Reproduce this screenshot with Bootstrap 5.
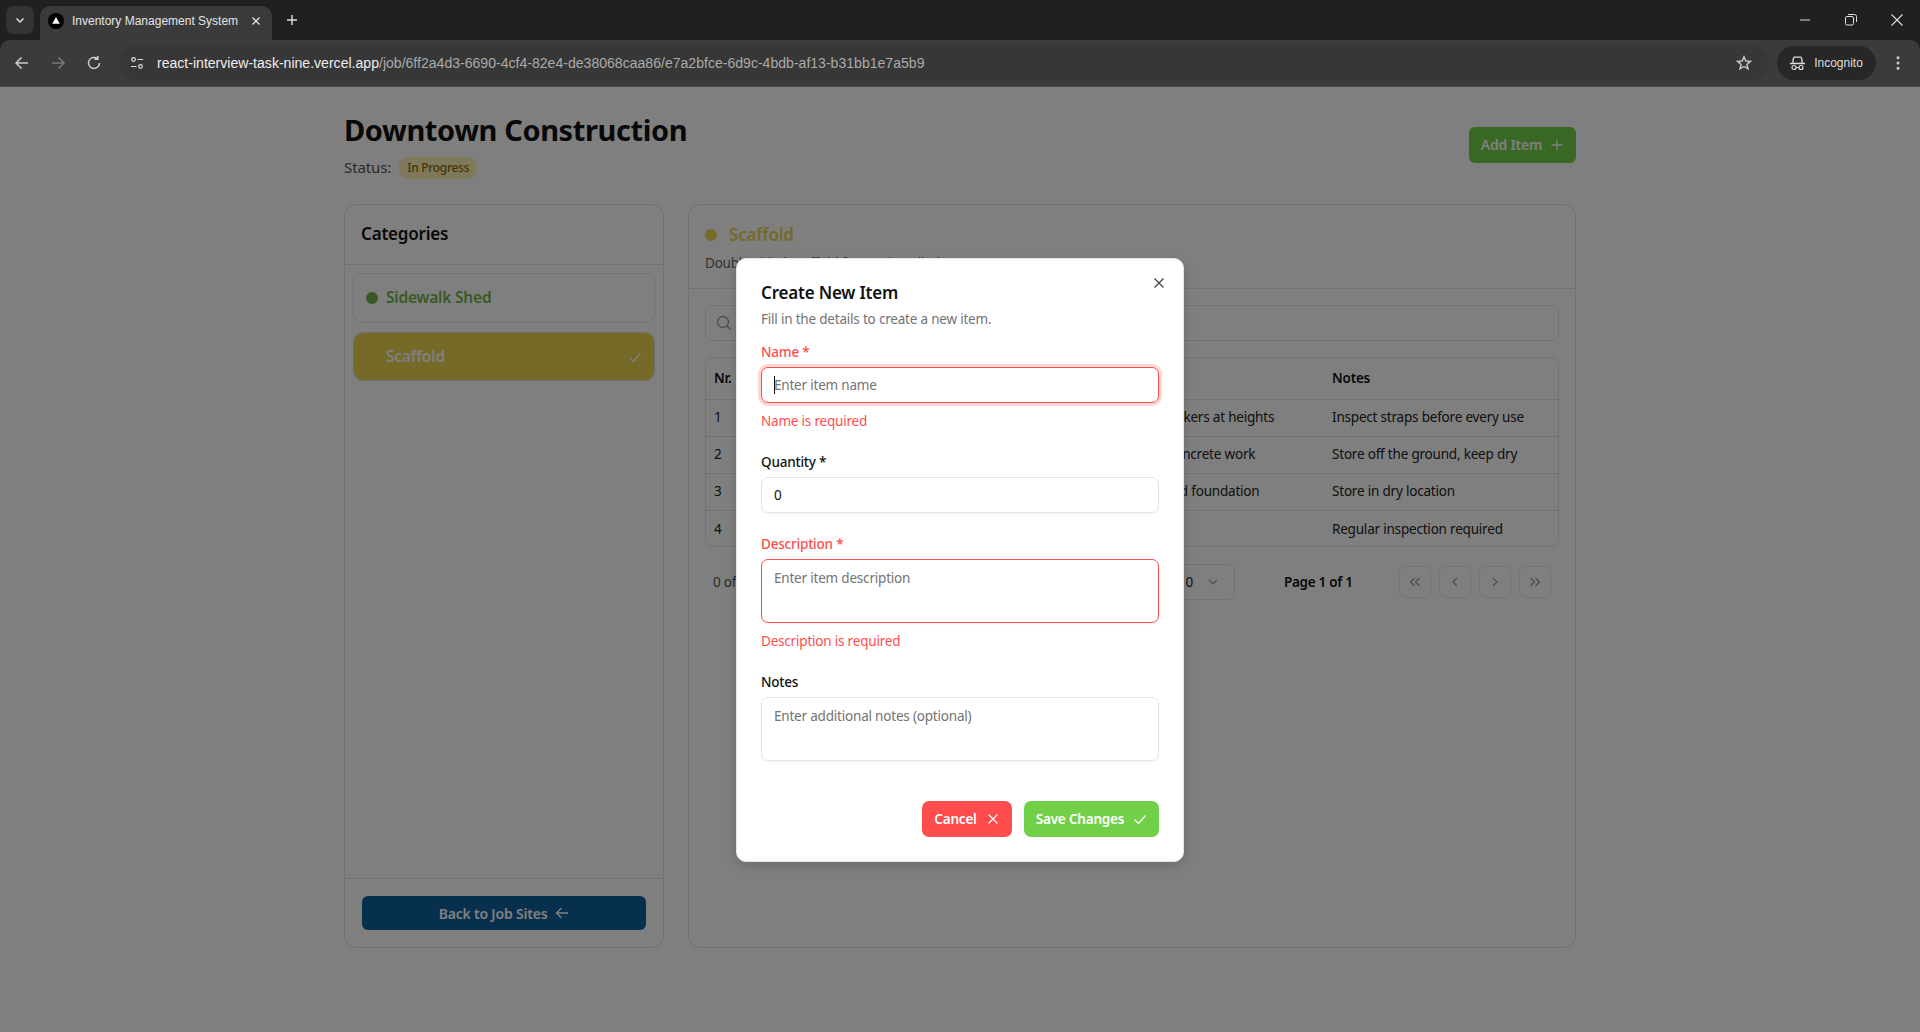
<!DOCTYPE html>
<html lang="en"><head><meta charset="utf-8"><title>Inventory Management System</title>
<link href="https://cdn.jsdelivr.net/npm/bootstrap@5.3.0/dist/css/bootstrap.min.css" rel="stylesheet">
<style>
html,body{height:100%;overflow:hidden}
body{font-family:"Noto Sans","Open Sans",sans-serif;color:#111;background:#fff;display:flex;flex-direction:column;font-size:13.5px;letter-spacing:-.2px}
svg{display:block;flex:none}
button,input,textarea{letter-spacing:inherit}
.chromewrap{background:#1f2120;flex:none;letter-spacing:0}
.tabstrip{height:40px;display:flex;align-items:flex-end;color:#ddd}
.tabsearch{width:28px;height:28px;border-radius:8px;background:#333;margin:0 6px 6px 6px;display:flex;align-items:center;justify-content:center}
.tabitem{width:232px;height:34px;background:#3b3b3b;border-radius:10px 10px 0 0;display:flex;align-items:center;padding:0 11px 4px 8px;font:12px "Liberation Sans",sans-serif;color:#e3e3e3;gap:8px}
.tabitem span{flex:1;white-space:nowrap}
.newtab{margin:0 0 14px 14px}
.winctl{margin-left:auto;display:flex;align-items:center;gap:34px;padding:0 17px 14px 0}
.toolbar{height:47px;background:#3b3b3b;border-radius:10px 10px 0 0;display:flex;align-items:center;border-bottom:1px solid #4a4a4a;padding-left:14px;gap:20px}
.urlbar{width:1648px;height:34px;margin-left:-2px;border-radius:17px;background:#373737;display:flex;align-items:center;padding:0 16px 0 9px;font:14.070px "Liberation Sans",sans-serif;color:#aaa;white-space:nowrap}
.urltext{margin-left:12px}
.urlbar b{font-weight:400;color:#eee}
.incog{height:34px;width:99px;border-radius:17px;background:#272727;margin-left:-11px;display:flex;align-items:center;justify-content:center;gap:9px;font:12px "Liberation Sans",sans-serif;color:#ddd}
.dots{margin-left:-6px}
.pagearea{position:relative;flex:1;min-height:0}
.shell{width:1232px;margin:0 auto;padding-top:24px;height:100%}
.jobtitle{font-size:29px;font-weight:700;line-height:38px;margin:0;color:#111;letter-spacing:-.4px}
.statusline{color:#555;line-height:24px;margin-top:6px;gap:8px;font-size:15px;letter-spacing:-.1px}
.statuschip{background:#fdf3b6;color:#8a6a05;font-size:12px;font-weight:500;border-radius:9px;padding:0 8px;line-height:22px;letter-spacing:-.3px;margin-top:1px}
.addbtn{background:#72d048;color:#fff;font-weight:600;border:0;height:36px;width:107px;border-radius:6px;font-size:14px;gap:8px;margin-top:-1px}
.panels{display:flex;gap:24px;margin-top:25px;height:744px}
.panelbox{border:1px solid #e2e2e2;border-radius:12px;background:#fff;display:flex;flex-direction:column}
.catpanel{width:320px}
.dataPanel{width:888px}
.cathead{height:60px;border-bottom:1px solid #e2e2e2;padding:0 16px 1px;font-size:17px;font-weight:600;display:flex;align-items:center}
.catlist{flex:1;padding:8px;display:flex;flex-direction:column;gap:9px}
.catitem{height:50px;border:1px solid #e5e5e5;border-radius:10px;display:flex;align-items:center;padding:0 12px;gap:8px;font-size:15.500px;font-weight:600;color:#72b548}
.catitem.chosen{background:#ecd552;color:#fff;padding-left:32px;height:49px;border-color:#dfdfdf;justify-content:space-between}
.dotmark{width:12px;height:12px;border-radius:50%;background:#72b548}
.dotmark.gold{background:#ecd552}
.catfoot{height:69px;border-top:1px solid #e2e2e2;padding:17px 17px 0}
.backbtn{width:284px;height:34px;background:#0f609e;color:#fff;border:0;border-radius:6px;font-size:14px;font-weight:600;gap:8px}
.datahead{height:84px;border-bottom:1px solid #e2e2e2;padding:16px}
.datatitle{font-size:17px;font-weight:600;color:#ecd552;gap:12px;line-height:28px}
.datasub{color:#666;line-height:20px;margin-top:4px}
.databody{padding:16px}
.searchbox{height:36px;border:1px solid #e2e2e2;border-radius:7px;padding:0 10px;display:flex;align-items:center}
.tablewrap{border:1px solid #e2e2e2;border-radius:8px;margin-top:16px;height:190px;overflow:hidden}
.invtable{width:100%;margin:0;table-layout:fixed;color:#222}
.invtable th,.invtable td{padding:0 8px;height:37px;border-bottom:1px solid #e2e2e2;white-space:nowrap;overflow:hidden;vertical-align:middle;font-weight:400;color:#222}
.invtable th{height:41px;font-weight:600;color:#111}
.invtable tr:last-child td{border-bottom:0}
.pagerrow{height:36px;margin-top:17px;padding:0 8px;display:flex;align-items:center;color:#555}
.rowsel{margin-left:auto;width:118px;height:36px;border:1px solid #e2e2e2;border-radius:7px;display:flex;align-items:center;justify-content:flex-end;gap:14px;padding-right:15px;color:#222}
.pagelabel{font-weight:600;color:#111;margin-left:49px;width:115px;letter-spacing:-.3px}
.pgbtn{width:32px;height:32px;border:1px solid #e8e8e8;border-radius:7px;display:flex;align-items:center;justify-content:center}
.dimlayer{position:absolute;inset:0;background:rgba(0,0,0,.5);display:flex;align-items:center;justify-content:center}
.dialogbox{width:448px;height:604px;margin-top:1px;background:#fff;border-radius:10px;border:1px solid #e5e5e5;padding:24px;position:relative;box-shadow:0 4px 12px rgba(0,0,0,.15)}
.dlgclose{position:absolute;top:16px;right:16px;border:0;background:none;padding:0}
.dlgtitle{font-size:17px;font-weight:600;line-height:20px;margin:0 0 6px;color:#111}
.dlgsub{color:#737373;line-height:20px;margin:0 0 13px}
.fieldlabel{display:block;font-weight:500;line-height:20px;margin:0 0 5px;color:#111}
.fieldlabel.bad,.errtext{color:#ff4d4d}
.fieldctl{display:block;width:100%;height:36px;border:1px solid #e5e5e5;border-radius:7px;padding:0 12px;font-size:13.500px;color:#111;outline:0;box-shadow:0 1px 2px rgba(0,0,0,.05);resize:none;font-family:inherit;background:#fff}
textarea.fieldctl{height:64px;padding-top:8px}
.fieldctl::placeholder{color:#737373}
.fieldctl.bad{border-color:#ff4d4d}
.fieldctl.focusbad{box-shadow:0 0 0 3px #ffd6d6}
.caretmark{position:absolute;left:13px;top:9px;width:1px;height:18px;background:#111}
.errtext{line-height:20px;margin-top:8px}
.fieldgroup{margin-bottom:21px}
.dlgactions{display:flex;justify-content:flex-end;gap:12px;margin-top:40px}
.actbtn{height:36px;border:0;border-radius:7px;color:#fff;font-weight:600;font-size:13.500px;gap:9px;padding:0 8px;white-space:nowrap}
.actcancel{background:#ff4d4d;width:90px}
.actsave{background:#72d048;width:135px}
</style></head><body>
<div class="chromewrap">
<div class="tabstrip">
<div class="tabsearch"><svg width="12" height="12" viewBox="0 0 12 12"><path d="M2.500 4.500 6 8 9.500 4.500" fill="none" stroke="#ddd" stroke-width="1.500"/></svg></div>
<div class="tabitem"><svg width="16" height="16" viewBox="0 0 16 16"><circle cx="8" cy="8" r="8" fill="#000"/><path d="M8 4 11.800 10.800H4.200Z" fill="#fff"/></svg><span>Inventory Management System</span><svg width="10" height="10" viewBox="0 0 10 10"><path d="M1.500 1.500 8.500 8.500M8.500 1.500 1.500 8.500" stroke="#ddd" stroke-width="1.300"/></svg></div>
<svg class="newtab" width="12" height="12" viewBox="0 0 12 12"><path d="M6 1V11M1 6H11" stroke="#ddd" stroke-width="1.400"/></svg>
<div class="winctl">
<svg width="12" height="12" viewBox="0 0 12 12"><path d="M1 6H11" stroke="#ddd"/></svg>
<svg width="12" height="12" viewBox="0 0 12 12"><rect x=".5" y="2.500" width="8" height="8.500" rx="1.500" fill="none" stroke="#ddd"/><path d="M3 .5H9.500A2 2 0 0 1 11.500 2.500V8" fill="none" stroke="#ddd"/></svg>
<svg width="12" height="12" viewBox="0 0 12 12"><path d="M.5.500 11.500 11.500M11.500.500.500 11.500" stroke="#ddd" stroke-width="1.100"/></svg>
</div></div>
<div class="toolbar">
<svg width="16" height="16" viewBox="0 0 16 16"><path d="M14 8H2.500M7.500 2.500 2 8l5.500 5.500" fill="none" stroke="#ccc" stroke-width="1.500"/></svg>
<svg width="16" height="16" viewBox="0 0 16 16"><path d="M2 8H13.500M8.500 2.500 14 8l-5.500 5.500" fill="none" stroke="#777" stroke-width="1.500"/></svg>
<svg width="16" height="16" viewBox="0 0 16 16"><path d="M13.500 8A5.500 5.500 0 1 1 11.500 3.700M11.800 1V4.300H8.500" fill="none" stroke="#ccc" stroke-width="1.500"/></svg>
<div class="urlbar"><svg width="16" height="16" viewBox="0 0 16 16"><circle cx="4.500" cy="4.500" r="1.800" fill="none" stroke="#ddd" stroke-width="1.200"/><path d="M8.500 4.500H14M2 11.500H7.500" stroke="#ddd" stroke-width="1.200"/><circle cx="11.500" cy="11.500" r="1.800" fill="none" stroke="#ddd" stroke-width="1.200"/></svg>
<span class="urltext"><b>react-interview-task-nine.vercel.app</b>/job/6ff2a4d3-6690-4cf4-82e4-de38068caa86/e7a2bfce-6d9c-4bdb-af13-b31bb1e7a5b9</span>
<svg class="ms-auto" width="16" height="16" viewBox="0 0 16 16"><path d="M8 1.800 9.800 6 14.400 6.400 10.900 9.400 12 13.900 8 11.500 4 13.900 5.100 9.400 1.600 6.400 6.200 6Z" fill="none" stroke="#ccc" stroke-width="1.400"/></svg></div>
<div class="incog"><svg width="15" height="15" viewBox="0 0 15 15"><path d="M0 7.500H15M3 7V3.500L4.200 1.200H10.800L12 3.500V7" fill="none" stroke="#ddd" stroke-width="1.300"/><circle cx="4" cy="11.500" r="2" fill="none" stroke="#ddd" stroke-width="1.200"/><circle cx="11" cy="11.500" r="2" fill="none" stroke="#ddd" stroke-width="1.200"/><path d="M6 11.500H9" stroke="#ddd"/></svg><span>Incognito</span></div>
<svg class="dots" width="16" height="16" viewBox="0 0 16 16"><circle cx="8" cy="2.800" r="1.500" fill="#ccc"/><circle cx="8" cy="8" r="1.500" fill="#ccc"/><circle cx="8" cy="13.200" r="1.500" fill="#ccc"/></svg>
</div></div>
<div class="pagearea">
<div class="shell">
<div class="d-flex justify-content-between align-items-center">
<div><h1 class="jobtitle">Downtown Construction</h1>
<div class="statusline d-flex align-items-center"><span>Status:</span><span class="statuschip">In Progress</span></div></div>
<button class="addbtn d-flex align-items-center justify-content-center">Add Item <svg width="14" height="14" viewBox="0 0 14 14"><path d="M7 1.500V12.500M1.500 7H12.500" stroke="#fff" stroke-width="1.300"/></svg></button>
</div>
<div class="panels">
<div class="panelbox catpanel">
<div class="cathead">Categories</div>
<div class="catlist">
<div class="catitem"><i class="dotmark"></i>Sidewalk Shed</div>
<div class="catitem chosen">Scaffold<svg width="14" height="14" viewBox="0 0 14 14"><path d="M1.500 7.500 5.500 11.500 12.500 3" fill="none" stroke="#fff" stroke-width="1.200"/></svg></div>
</div>
<div class="catfoot"><button class="backbtn d-flex align-items-center justify-content-center">Back to Job Sites <svg width="14" height="14" viewBox="0 0 14 14"><path d="M13 7H1.500M6.500 2 1.500 7l5 5" fill="none" stroke="#fff" stroke-width="1.300"/></svg></button></div>
</div>
<div class="panelbox dataPanel">
<div class="datahead"><div class="datatitle d-flex align-items-center"><i class="dotmark gold"></i>Scaffold</div><div class="datasub">Double-sided scaffold frames installed</div></div>
<div class="databody">
<div class="searchbox"><svg width="16" height="16" viewBox="0 0 16 16"><circle cx="7" cy="7" r="5.500" fill="none" stroke="#999" stroke-width="1.300"/><path d="M11 11 14.500 14.500" stroke="#999" stroke-width="1.300"/></svg></div>
<div class="tablewrap"><table class="invtable"><colgroup><col width="60"><col width="200"><col width="132"><col width="226"><col></colgroup>
<thead><tr><th>Nr.</th><th>Item</th><th>Quantity</th><th>Description</th><th>Notes</th></tr></thead>
<tbody>
<tr><td>1</td><td>Safety harness</td><td>12</td><td>Protects workers at heights</td><td>Inspect straps before every use</td></tr>
<tr><td>2</td><td>Portland cement</td><td>40</td><td>Mixed for concrete work</td><td>Store off the ground, keep dry</td></tr>
<tr><td>3</td><td>Steel rebar</td><td>25</td><td>Cast slab and foundation</td><td>Store in dry location</td></tr>
<tr><td>4</td><td>Scaffold frame</td><td>8</td><td>Modular</td><td>Regular inspection required</td></tr>
</tbody></table></div>
<div class="pagerrow"><span>0 of 4 row(s) selected</span>
<div class="rowsel"><span>10</span><svg width="12" height="12" viewBox="0 0 12 12"><path d="M2 4 6 8 10 4" fill="none" stroke="#999" stroke-width="1.200"/></svg></div>
<span class="pagelabel">Page 1 of 1</span>
<div class="d-flex gap-2">
<div class="pgbtn"><svg width="14" height="14" viewBox="0 0 14 14"><path d="M6.500 3 2.500 7l4 4M11.500 3 7.500 7l4 4" fill="none" stroke="#999" stroke-width="1.200"/></svg></div>
<div class="pgbtn"><svg width="14" height="14" viewBox="0 0 14 14"><path d="M9 3 5 7l4 4" fill="none" stroke="#999" stroke-width="1.200"/></svg></div>
<div class="pgbtn"><svg width="14" height="14" viewBox="0 0 14 14"><path d="M5 3 9 7l-4 4" fill="none" stroke="#999" stroke-width="1.200"/></svg></div>
<div class="pgbtn"><svg width="14" height="14" viewBox="0 0 14 14"><path d="M2.500 3 6.500 7l-4 4M7.500 3 11.500 7l-4 4" fill="none" stroke="#999" stroke-width="1.200"/></svg></div>
</div></div>
</div></div>
</div></div>
<div class="dimlayer">
<div class="dialogbox">
<button class="dlgclose" aria-label="Close"><svg width="16" height="16" viewBox="0 0 16 16"><path d="M3.500 3.500 12.500 12.500M12.500 3.500 3.500 12.500" stroke="#444" stroke-width="1.300"/></svg></button>
<h2 class="dlgtitle">Create New Item</h2>
<p class="dlgsub">Fill in the details to create a new item.</p>
<div class="fieldgroup"><label class="fieldlabel bad">Name *</label><div class="position-relative"><input class="fieldctl bad focusbad" placeholder="Enter item name"><i class="caretmark"></i></div><div class="errtext">Name is required</div></div>
<div class="fieldgroup"><label class="fieldlabel">Quantity *</label><input class="fieldctl" value="0"></div>
<div class="fieldgroup"><label class="fieldlabel bad">Description *</label><textarea class="fieldctl bad" placeholder="Enter item description"></textarea><div class="errtext">Description is required</div></div>
<div><label class="fieldlabel">Notes</label><textarea class="fieldctl" placeholder="Enter additional notes (optional)"></textarea></div>
<div class="dlgactions">
<button class="actbtn actcancel d-flex align-items-center justify-content-center">Cancel <svg width="14" height="14" viewBox="0 0 14 14"><path d="M2.500 2.500 11.500 11.500M11.500 2.500 2.500 11.500" stroke="#fff" stroke-width="1.200"/></svg></button>
<button class="actbtn actsave d-flex align-items-center justify-content-center">Save Changes <svg width="14" height="14" viewBox="0 0 14 14"><path d="M1.500 7.500 5.500 11.500 12.500 3.500" fill="none" stroke="#fff" stroke-width="1.200"/></svg></button>
</div></div></div>
</div>
<script src="https://cdn.jsdelivr.net/npm/bootstrap@5.3.0/dist/js/bootstrap.bundle.min.js"></script>
</body></html>
